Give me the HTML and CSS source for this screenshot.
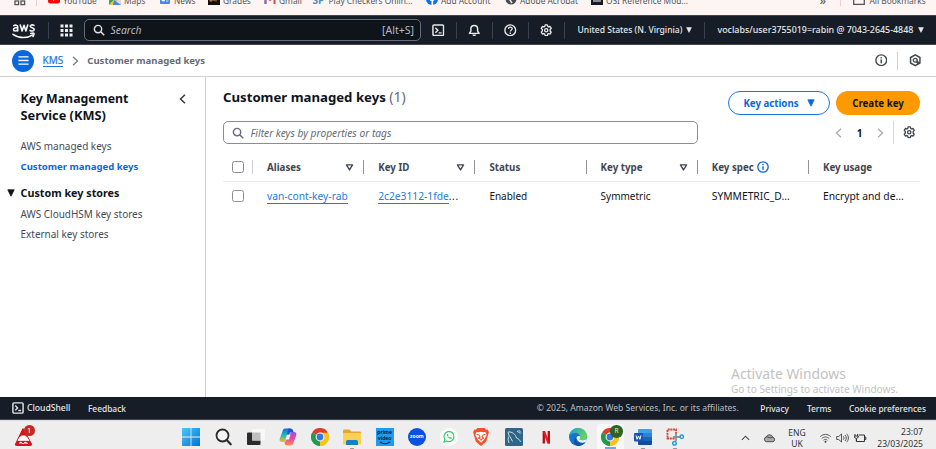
FILE: index.html
```html
<!DOCTYPE html>
<html lang="en">
<head>
<meta charset="utf-8">
<title>Customer managed keys</title>
<link rel="stylesheet" href="styles.css">
</head>
<body>
<svg class="defs" width="0" height="0" aria-hidden="true">
  <defs>
    <symbol id="gear" viewBox="0 0 16 16"><path d="M6.600 1.200h2.800l.5 1.900 1.200.7 1.900-.6 1.400 2.400L13 7v2l1.400 1.400-1.400 2.400-1.900-.6-1.200.7-.5 1.900H6.600l-.5-1.900-1.200-.7-1.900.6-1.400-2.400L3 9V7L1.600 5.600 3 3.200l1.900.6 1.200-.7z" fill="none" stroke="currentColor" stroke-width="1.700" stroke-linejoin="round"/><circle cx="8" cy="8" r="2.100" fill="none" stroke="currentColor" stroke-width="1.700"/></symbol>
    <symbol id="search" viewBox="0 0 16 16"><circle cx="6.700" cy="6.700" r="4.900" fill="none" stroke="currentColor" stroke-width="1.900"/><path d="M10.300 10.300 15 15" stroke="currentColor" stroke-width="2"/></symbol>
    <symbol id="shell" viewBox="0 0 16 16"><rect x="1.200" y="1.200" width="13.600" height="13.600" rx="1.500" fill="none" stroke="currentColor" stroke-width="1.900"/><path d="m4.300 4.700 3.200 3.200-3.200 3.200M8.500 11.300h3.700" fill="none" stroke="currentColor" stroke-width="1.800"/></symbol>
    <symbol id="info" viewBox="0 0 16 16"><circle cx="8" cy="8" r="6.900" fill="none" stroke="currentColor" stroke-width="1.800"/><path d="M8 7v4.800M8 4v1.800" stroke="currentColor" stroke-width="1.900"/></symbol>
    <symbol id="chrome" viewBox="0 0 20 20"><path d="M10 10 1.300 5A10 10 0 0 1 18.700 5z" fill="#e23b2e"/><path d="M10 10 18.700 5A10 10 0 0 1 10 20z" fill="#fcc21b"/><path d="M10 10v10A10 10 0 0 1 1.300 5z" fill="#229a4b"/><path d="M10 5.200h8.800A10 10 0 0 1 10 20l4.200-7.500z" fill="#fcc21b"/><circle cx="10" cy="10" r="4.900" fill="#fff"/><circle cx="10" cy="10" r="3.800" fill="#3478e8"/></symbol>
    <symbol id="sort" viewBox="0 0 10 10"><path d="M1.600 2h6.800L5 7.700z" fill="none" stroke="currentColor" stroke-width="1.500" stroke-linejoin="round"/></symbol>
    <symbol id="caret" viewBox="0 0 10 10"><path d="M1 1h8L5 9z" fill="currentColor" stroke="currentColor" stroke-linejoin="round"/></symbol>
    <linearGradient id="win" x2="1" y2="1"><stop stop-color="#4cc8f5"/><stop offset="1" stop-color="#0870cf"/></linearGradient>
    <linearGradient id="copA" x2="0" y2="1"><stop stop-color="#1769df"/><stop offset=".5" stop-color="#22b7b9"/><stop offset="1" stop-color="#f2bf22"/></linearGradient>
    <linearGradient id="copB" x2="0" y2="1"><stop stop-color="#9553e8"/><stop offset=".5" stop-color="#e74a9c"/><stop offset="1" stop-color="#fb8a50"/></linearGradient>
    <linearGradient id="edgeA" x2="1" y2=".4"><stop stop-color="#1ba0de"/><stop offset="1" stop-color="#63d45c"/></linearGradient>
  </defs>
</svg>

<div class="screen">
  <div class="bookmarks">
    <span class="bm"><svg class="bm-apps" viewBox="0 0 12 12"><g fill="none" stroke="#555" stroke-width="1.300"><rect x="1" y="1" width="3.600" height="3.600"/><rect x="7" y="1" width="3.600" height="3.600"/><rect x="1" y="7" width="3.600" height="3.600"/><rect x="7" y="7" width="3.600" height="3.600"/></g></svg></span>
    <span class="bm"><i class="bm-line"></i></span>
    <span class="bm"><svg viewBox="0 0 12 12"><rect y="1.500" width="12" height="9" rx="2.500" fill="#f00"/><path d="m5 4 3.200 2L5 8z" fill="#fff"/></svg>YouTube</span>
    <span class="bm"><svg viewBox="0 0 12 12"><rect width="12" height="12" rx="1" fill="#34a853"/><path d="M0 12 12 0v12z" fill="#d8dde2"/><path d="M0 12 10 2l2 2-8 8z" fill="#fbc02d"/><path d="m5 7 7 5H4z" fill="#4285f4"/></svg>Maps</span>
    <span class="bm"><svg viewBox="0 0 12 12"><rect x="1" y="2" width="10" height="9" rx="1" fill="#4285f4"/><path d="M3 5h2.500v3H3zM7 5.500h2.500M7 8h2.500" fill="#fff" stroke="#fff" stroke-width=".8"/></svg>News</span>
    <span class="bm"><svg viewBox="0 0 12 12"><rect width="12" height="12" fill="#111"/><path d="M2 5v3h2V5zM6 5v3M8 8.500V5h2" fill="none" stroke="#e58a3c"/></svg>Grades</span>
    <span class="bm"><svg viewBox="0 0 12 12"><path d="M1.500 11V3L6 7l4.500-4v8" fill="none" stroke="#e24a3d" stroke-width="2"/><path d="M1.500 4v7" stroke="#4b83e8" stroke-width="2"/></svg>Gmail</span>
    <span class="bm"><b class="bm-sp">SP</b>Play Checkers Onlin...</span>
    <span class="bm"><svg viewBox="0 0 12 12"><circle cx="6" cy="6" r="6" fill="#0a72ef"/><path d="M6.300 12V5.500c0-1.500.6-2 2-2M4 7h4.200" fill="none" stroke="#fff" stroke-width="1.700"/></svg>Add Account</span>
    <span class="bm"><svg viewBox="0 0 12 12"><circle cx="6" cy="6" r="5.500" fill="#484a4e"/><path d="M2 4c3-1 4 1 3 3l2 3M7 2l3 3" fill="none" stroke="#eee" stroke-width="1.500"/></svg>Adobe Acrobat</span>
    <span class="bm"><svg viewBox="0 0 12 12"><rect width="12" height="12" fill="#171923"/><path d="M2 8h8M3 5l1.500 2M6 4v3M9 5 7.500 7" stroke="#fff"/></svg>OSI Reference Mod...</span>
    <span class="bm bm-more">»</span>
    <span class="bm"><i class="bm-line"></i></span>
    <span class="bm"><svg class="bm-folder" viewBox="0 0 12 12"><path d="M.7 10.300V1.500H5l1.200 1.500h5.100v7.300z" fill="none" stroke="#555" stroke-width="1.300"/></svg>All Bookmarks</span>
  </div>

  <header class="nav">
    <svg class="aws" viewBox="0 0 24 18"><g fill="none" stroke="#f4f5f6" stroke-width="1.600" stroke-linecap="round" stroke-linejoin="round"><path d="M1.800 3.700C3 2.900 5.700 2.700 5.700 5v4M5.700 6C3.400 5.400 1.500 6 1.500 7.500c0 1.900 3 2 4.200.1M8.300 3l1.800 6L12 3.300 13.900 9l1.800-6M22 3.400c-1.500-.9-3.800-.6-3.800.9 0 1.900 4 1 4 3.100 0 1.800-2.600 2-4.200 1.100"/><path d="M1 12.300c6.500 4.500 14.500 4 19.700.5"/><path d="M18.700 11.500c1.500-.4 3-.5 3.300 0s-.2 1.800-1 3"/></g></svg>
    <i class="nav-line"></i>
    <svg class="grid-icon" viewBox="0 0 13 13"><path d="M.5.500h3v3h-3zM5 .5h3v3H5zM9.500.500h3v3h-3zM.5 5h3v3h-3zM5 5h3v3H5zM9.500 5h3v3h-3zM.5 9.500h3v3h-3zM5 9.500h3v3H5zM9.500 9.500h3v3h-3z" fill="#eceef0"/></svg>
    <div class="nav-search"><svg class="i12"><use href="#search"/></svg><em>Search</em><span>[Alt+S]</span></div>
    <div class="nav-icons">
      <span><svg class="i13"><use href="#shell"/></svg></span>
      <span><svg class="i13" viewBox="0 0 16 16"><path d="M1.800 12h12.400L12.300 9V6.200a4.300 4.300 0 0 0-8.600 0V9z" fill="none" stroke="currentColor" stroke-width="1.900" stroke-linejoin="round"/><path d="M5.500 13.300h5c-.3 3-4.700 3-5 0z" fill="currentColor"/></svg></span>
      <span><svg class="i13" viewBox="0 0 16 16"><circle cx="8" cy="8" r="6.900" fill="none" stroke="currentColor" stroke-width="1.800"/><path d="M5.700 6.300c0-3 4.700-2.900 4.700-.2C10.400 8 8 7.800 8 9.700M8 10.900v1.800" fill="none" stroke="currentColor" stroke-width="1.700"/></svg></span>
      <span><svg class="i13"><use href="#gear"/></svg></span>
    </div>
    <div class="region">United States (N. Virginia)<svg class="i6"><use href="#caret"/></svg></div>
    <div class="account"><span>voclabs/user3755019=rabin @ 7043-2645-4848</span><svg class="i6"><use href="#caret"/></svg></div>
  </header>

  <div class="crumbs">
    <span class="menu"><svg viewBox="0 0 12 12"><path d="M.5 2h11M.5 6h11M.5 10h11" stroke="#fff" stroke-width="1.400"/></svg></span>
    <a class="crumb-link">KMS</a>
    <svg class="crumb-sep" viewBox="0 0 7 10"><path d="m1 .8 4.500 4.200L1 9.200" fill="none" stroke="#7b828c" stroke-width="1.400"/></svg>
    <b>Customer managed keys</b>
    <div class="crumb-tools">
      <svg class="i13"><use href="#info"/></svg>
      <i></i>
      <svg class="i13" viewBox="0 0 16 16"><path d="M8 1.100 14 4.500v7L8 14.900l-6-3.400v-7z" fill="none" stroke="currentColor" stroke-width="1.900" stroke-linejoin="round"/><circle cx="8" cy="8" r="2.500" fill="none" stroke="currentColor" stroke-width="1.700"/><path d="m8.500 8 5 2.300-2.800 3z" fill="currentColor"/></svg>
    </div>
  </div>

  <div class="body">
    <aside class="side">
      <div class="side-head"><h2>Key Management<br><span>Service (KMS)</span></h2><svg viewBox="0 0 7 10"><path d="M6 .8 1.500 5 6 9.200" fill="none" stroke="#343b46" stroke-width="1.500"/></svg></div>
      <a>AWS managed keys</a>
      <a class="active">Customer managed keys</a>
      <div class="group"><svg class="i8"><use href="#caret"/></svg>Custom key stores</div>
      <a>AWS CloudHSM key stores</a>
      <a>External key stores</a>
    </aside>

    <main class="main">
      <div class="title-row">
        <h1>Customer managed keys <span>(1)</span></h1>
        <button class="btn-outline">Key actions<svg class="i8"><use href="#caret"/></svg></button>
        <button class="btn-primary">Create key</button>
      </div>
      <div class="filter-row">
        <div class="filter"><svg class="i12"><use href="#search"/></svg><em>Filter keys by properties or tags</em></div>
        <div class="pager">
          <svg viewBox="0 0 7 10"><path d="M6 .8 1.500 5 6 9.200" fill="none" stroke="#a5abb3" stroke-width="1.300"/></svg>
          <b>1</b>
          <svg viewBox="0 0 7 10"><path d="m1 .8 4.500 4.200L1 9.200" fill="none" stroke="#a5abb3" stroke-width="1.300"/></svg>
        </div>
        <div class="prefs"><svg class="i13"><use href="#gear"/></svg></div>
      </div>
      <div class="row head">
        <div><i class="check"></i></div>
        <div>Aliases<svg class="sort"><use href="#sort"/></svg></div>
        <div>Key ID<svg class="sort"><use href="#sort"/></svg></div>
        <div>Status</div>
        <div>Key type<svg class="sort"><use href="#sort"/></svg></div>
        <div>Key spec<svg class="spec-info"><use href="#info"/></svg></div>
        <div>Key usage</div>
      </div>
      <div class="row data">
        <div><i class="check"></i></div>
        <div><a>van-cont-key-rab</a></div>
        <div><a>2c2e3112-1fde</a><span class="dots">...</span></div>
        <div>Enabled</div>
        <div>Symmetric</div>
        <div>SYMMETRIC_D...</div>
        <div>Encrypt and de...</div>
      </div>
      <div class="watermark"><p>Activate Windows</p><small>Go to Settings to activate Windows.</small></div>
    </main>
  </div>

  <footer class="foot">
    <svg class="i12"><use href="#shell"/></svg><span class="cs">CloudShell</span><span>Feedback</span>
    <span class="copy">© 2025, Amazon Web Services, Inc. or its affiliates.</span>
    <span class="f-priv">Privacy</span><span class="f-terms">Terms</span><span>Cookie preferences</span>
  </footer>

  <div class="taskbar">
    <div class="widget"><svg viewBox="0 0 20 22"><path d="M9 4.500 17.500 20q.5 1.500-1 1.500h-14q-1.500 0-1-1.500z" fill="#d8121b" stroke="#d8121b" stroke-linejoin="round"/><path d="M5 14.500c1-3 6-4 8-1l2 3H4zM5 19.300l2-1.300 2 2 2-2 3 1.500" fill="#fff" stroke="#fff" stroke-width=".7"/></svg><span class="count">1</span></div>
    <div class="apps">
      <span><svg viewBox="0 0 18 18"><path d="M0 0h8.600v8.600H0zM9.400 0H18v8.600H9.400zM0 9.400h8.600V18H0zM9.400 9.400H18V18H9.400z" fill="url(#win)"/></svg></span>
      <span><svg viewBox="0 0 18 18"><circle cx="8.500" cy="7.500" r="6" fill="#f5f5f5" stroke="#2c2c2c" stroke-width="1.800"/><path d="m12.700 12 4 4.300" stroke="#2c2c2c" stroke-width="2.200" stroke-linecap="round"/></svg></span>
      <span><svg viewBox="0 0 18 18"><rect x="0" y="4.500" width="13.500" height="12.500" rx="1" fill="#2b2b2b"/><rect x="5" y="1" width="13" height="11.500" rx="1" fill="#f8f8f8"/><rect x="5" y="4.500" width="8.500" height="8" fill="#bfbfbf"/></svg></span>
      <span><svg viewBox="0 0 18 18"><path d="M12.500 3C12 1 11.300.6 9.500.6H6.300C4.500.6 4 1.500 3.300 4L1 10c-1 3 0 4 2.500 4h2.300z" fill="url(#copA)"/><path d="M5.500 15c.5 2 1.200 2.400 3 2.400h3.200c1.800 0 2.300-.9 3-3.400L17 8c1-3 0-4-2.500-4h-2.300z" fill="url(#copB)"/><path d="M8 6.500h3.500L10 11.500H6.500z" fill="#f4eef5"/><path d="M9.500.6h2c1.700 0 2.400 1 3 3.400h-2.300c-1.400 0-2 .7-2.400 2.500H8z" fill="#1b56cf"/></svg></span>
      <span><svg><use href="#chrome"/></svg></span>
      <span class="open"><svg viewBox="0 0 18 18"><path d="M0 2.500Q0 1.500 1 1.500h5.500l2 2H17q1 0 1 1V16H0z" fill="#e6a72a"/><path d="M0 5h18v11.500H0z" fill="#fcd053"/><path d="M3 17v-3.500q0-1.500 1.500-1.500h9q1.500 0 1.500 1.500V17z" fill="#1680cc"/></svg></span>
      <span><b class="prime"><i>prime</i><i>video</i><svg viewBox="0 0 14 4"><path d="M1 1c4 3 8 3 12 0" fill="none" stroke="#071c2c" stroke-width="1.200"/></svg></b></span>
      <span><b class="zoom">zoom</b></span>
      <span><svg viewBox="0 0 18 18"><circle cx="9" cy="9" r="9" fill="#fff"/><path d="m4 14 .8-2.700A5 5 0 1 1 6.700 13z" fill="none" stroke="#35c969" stroke-width="1.200"/><path d="M7.100 6.200c-.9 1.500 1.900 5 4.200 4.700l.5-1.200-1.500-.8-.7.700c-.7-.3-1.300-.9-1.600-1.600l.5-.6-.6-1.400z" fill="#35c969"/></svg></span>
      <span><svg viewBox="0 0 18 18"><path d="M5.500 0h7L14.200 1.800l1.500-.2 1.200 2.600-.6 2-2.100 7.300L9 18l-5.200-4.500L1.700 6.200l-.6-2 1.200-2.600 1.500.2z" fill="#f4512b"/><path d="M4.500 4 7 4.300l2-.6 2 .6 2.500-.3L14.700 7l-2.500 4.500L9 14.800l-3.200-3.300L3.300 7z" fill="#fff"/><path d="m4.600 6.300 3 .9M13.400 6.300l-3 .9M7.500 7.500 8 9l-1.600 1.200L9 11.500l2.600-1.300L10 9l.5-1.500M9 11.500v1.200" fill="none" stroke="#f4512b" stroke-width="1.100"/></svg></span>
      <span><svg viewBox="0 0 18 18"><rect width="18" height="18" rx="1.500" fill="#2f6687"/><path d="M4 15c-1.300-3-1-5 .2-7L3 4c4-.5 7.500 2 8.500 6 2 .5 3 1.500 4 4M5 8.500l2.500 5M12 3l3.500 2.500M13.500 2 16 4.500" fill="none" stroke="#c7dce7" stroke-width="1"/></svg></span>
      <span><svg viewBox="0 0 18 18"><path d="M6.800 3v12.500M11.800 3v12.500" stroke="#b10c16" stroke-width="2.300"/><path d="M5.600 3h2.500l4.800 12.500h-2.500z" fill="#e81723"/></svg></span>
      <span><svg viewBox="0 0 18 18"><circle cx="9" cy="9" r="9" fill="#1676ca"/><path d="M.1 8C.8 3 4.600 0 9.200 0 14 0 18 3.600 18 8c0 3.200-2.500 4.300-5 4.300-1.600 0-2.700-.6-2.500-1.200.5-.5.8-1.100.8-1.900C11.300 6.400 8.700 4.900 6 5 3.200 5 .9 6.500.1 8z" fill="url(#edgeA)"/><path d="M7.600 8.800c-1.500 3 .8 6.600 4.300 6.600 1.900 0 3.300-.6 4.700-1.500C15 16.400 12.200 18 9 18c-3.800-1-6-5.200-1.400-9.200z" fill="#15529f"/><path d="M7.600 9.300c1-1.800 3.700-1.400 3.700-.1 0 .8-.3 1.400-.8 1.900-.2.600.9 1.200 2.500 1.200 2 0 3.900-.6 4.700-2-.2 1.200-.5 2.400-1.100 3.400-4 2.500-9.300-.4-9-4.400z" fill="#edf4f7"/></svg></span>
      <span class="current"><svg><use href="#chrome"/></svg><b class="avatar">R</b></span>
      <span class="open"><svg viewBox="0 0 18 18"><path d="M5 1h12q1 0 1 1v3H4V2q0-1 1-1z" fill="#3aa2e8"/><path d="M4 5h14v4H4z" fill="#2b83da"/><path d="M4 9h14v4H4z" fill="#1d62bc"/><path d="M4 13h14v3q0 1-1 1H5q-1 0-1-1z" fill="#164a9b"/><rect y="5" width="9" height="8.500" rx="1" fill="#1755ae"/><path d="m2 7.300 1.100 4L4.500 8l1.400 3.300L7 7.300" fill="none" stroke="#fff" stroke-width="1"/></svg></span>
      <span class="open"><svg viewBox="0 0 18 18"><path d="M8.500 10.500H1.500V1.500h8.500V7" fill="none" stroke="#d8432c" stroke-width="1.800" stroke-dasharray="2 .7"/><path d="M10 5v8M7 9h7.500" stroke="#89939c" stroke-width="1.800"/><circle cx="8.500" cy="15.300" r="1.800" fill="none" stroke="#2aa0dc" stroke-width="1.500"/><circle cx="15.800" cy="8.700" r="1.700" fill="none" stroke="#2aa0dc" stroke-width="1.500"/></svg></span>
    </div>
    <div class="tray">
      <svg class="up" viewBox="0 0 10 6"><path d="m1 5 4-4 4 4" fill="none" stroke="#444" stroke-width="1.200"/></svg>
      <svg class="cloud" viewBox="0 0 14 10"><path d="M3.500 9a2.700 2.700 0 0 1 0-5.200 3.800 3.800 0 0 1 7.100.4A2.500 2.500 0 0 1 10.800 9z" fill="#aaa" stroke="#444"/><path d="M3.500 4c2-.5 3.500 1.500 7 .5" fill="none" stroke="#444"/></svg>
      <div class="lang">ENG<br>UK</div>
      <svg class="wifi" viewBox="0 0 12 10"><g fill="none" stroke="#555"><path d="M.7 3.700c3-3 7.600-3 10.600 0M2.300 5.500c2.200-2 5.200-2 7.400 0M4 7.200c1.300-1.100 2.700-1.100 4 0"/></g><circle cx="6" cy="8.700" r="1" fill="#444"/></svg>
      <svg class="vol" viewBox="0 0 13 10"><path d="M.7 3.500h2L5.500 1v8L2.700 6.500h-2zM7.300 3.300c1 1 1 2.400 0 3.400M9 2c1.700 1.700 1.700 4.300 0 6M10.600.8c2.400 2.400 2.400 6 0 8.400" fill="none" stroke="#444" stroke-width=".9"/></svg>
      <svg class="bat" viewBox="0 0 13 10"><path d="M5 2h5.500v6.500h-8V6M10.500 4h1.300v2.500h-1.300M1 1v2M3.700 1v2M.3 3h4v1.300q-2 2.400-4 0zM2.300 5.500v3" fill="none" stroke="#333" stroke-width="1"/></svg>
      <div class="clock">23:07<br>23/03/2025</div>
    </div>
  </div>
</div>
</body>
</html>
```
FILE: styles.css
```css
* { box-sizing: border-box; }
body { margin: 0; background: #fff; font-family: "Noto Sans", "Open Sans", sans-serif; font-size: 10px; color: #0f141a; }
.defs { display: block; position: absolute; }
svg { display: block; flex: none; }
.screen { width: 936px; height: 449px; display: grid; grid-template-rows: 15px 30px 32px 320px 23px 29px; overflow: hidden; }
.i6 { width: 6px; height: 6px; }
.i8 { width: 8px; height: 8px; }
.i12 { width: 12px; height: 12px; }
.i13 { width: 12.5px; height: 12.5px; }

.bookmarks { display: grid; grid-template-columns: 22px 12px 61px 50px 49px 56px 49px 113px 79px 86px 229px 20.500px 12.500px 1fr; padding-left: 13.500px; background: #fdf5f4; height: 15px; overflow: hidden; }
.bm { display: flex; align-items: center; height: 12px; margin-top: -6px; font-size: 8.350px; color: #55555a; white-space: nowrap; }
.bm svg { width: 12px; height: 12px; margin-right: 3.500px; margin-top: -2px; }
.bm .bm-apps { margin-top: 0; }
.bm .bm-folder { margin-right: 5px; margin-top: 0; }
.bm-line { width: 1px; height: 12px; background: #f3ccd3; }
.bm-sp { width: 16px; color: #4a8fc4; font-size: 10px; }
.bm-more { font-size: 13px; }

.nav { display: flex; align-items: center; background: #161d26; color: #e6e9ec; padding-left: 12px; border-top: 1px solid #40464e; border-bottom: 1px solid #40464e; font-weight: 500; font-size: 8.560px; white-space: nowrap; }
.aws { width: 24px; height: 18px; margin-top: 1px; }
.nav-line { width: 1px; height: 17px; background: #38414d; margin: 0 11px 0 12px; }
.grid-icon { width: 13px; height: 13px; }
.nav-search { width: 337px; height: 22px; margin-left: 11px; border: 1.500px solid #656c77; border-radius: 5px; background: #0f141a; display: flex; align-items: center; padding: 0 6px 0 8px; color: #b4bac2; font-weight: 400; }
.nav-search .i12 { color: #e0e3e7; }
.nav-search em { margin-left: 5.500px; font-size: 10.400px; flex: 1; }
.nav-search span { font-size: 10.500px; }
.nav-icons { display: flex; }
.nav-icons span { width: 36px; height: 17px; display: grid; place-items: center; border-right: 1px solid #38414d; }
.region { display: flex; align-items: center; height: 17px; padding-left: 12.500px; width: 140px; border-right: 1px solid #38414d; gap: 4px; margin-right: 12.500px; }
.account { display: flex; align-items: center; gap: 4.500px; font-size: 8.880px; }

.crumbs { display: flex; align-items: center; border-bottom: 1px solid #cfd3d8; padding: 0 15px 0 12px; }
.menu { width: 22px; height: 22px; border-radius: 50%; background: #0969dc; display: grid; place-items: center; }
.menu svg { width: 11px; height: 11px; }
.crumb-link { color: #2278dd; font-weight: 400; border-bottom: 1px solid #2278dd; line-height: 12px; margin-left: 8.500px; -webkit-text-stroke: .2px #2278dd; }
.crumb-sep { width: 7px; height: 10px; margin: 0 8px 0 9px; }
.crumbs b { font-size: 9.560px; color: #656b76; }
.crumb-tools { margin-left: auto; display: flex; align-items: center; color: #424650; }
.crumb-tools i { width: 1px; height: 18px; background: #cfd3d8; margin: 0 10.500px 0 10px; }

.body { display: grid; grid-template-columns: 206px 1fr; }
.side { border-right: 1px solid #c9cdd3; padding: 14px 0 0 20.500px; display: flex; flex-direction: column; }
.side-head { display: flex; justify-content: space-between; padding-right: 19px; margin-bottom: 12px; }
.side-head svg { width: 7px; height: 10px; margin-top: 3px; }
h2 { margin: 0; font-size: 12.350px; line-height: 16px; }
h2 span { font-size: 12.800px; }
.side a { font-size: 9.960px; line-height: 20.600px; color: #454b56; }
.side a.active { font-weight: 700; font-size: 9.560px; color: #0969dc; }
.group { display: flex; align-items: center; gap: 6px; margin: 5.500px 0 .5px -14px; font-weight: 700; font-size: 10.760px; line-height: 20.600px; }

.main { padding: 14px 16px 0 17px; display: flex; flex-direction: column; }
.title-row { display: flex; height: 24px; }
h1 { margin: -3px auto 0 0; font-size: 13.200px; line-height: 18px; }
h1 span { font-weight: 400; font-size: 14px; color: #656b76; }
button { height: 24px; border-radius: 12px; border: 0; font: 700 9.700px "Noto Sans", sans-serif; padding: 0; display: flex; align-items: center; justify-content: center; }
.btn-outline { width: 102px; border: 1.500px solid #1a74e0; background: #fff; color: #0969dc; gap: 8px; margin-right: 6px; }
.btn-primary { width: 84px; background: #f90; color: #0f141a; }
.filter-row { display: flex; margin-top: 6px; height: 23px; }
.filter { width: 474.500px; border: 1.500px solid #8c8c94; border-radius: 5px; display: flex; align-items: center; padding-left: 8px; gap: 6.500px; color: #656b76; }
.filter em { font-size: 10.220px; }
.pager { display: flex; align-items: center; margin-left: auto; gap: 14.500px; }
.pager svg { width: 7px; height: 10px; }
.prefs { width: 27px; margin-left: 9px; border-left: 1px solid #d4d7dc; display: flex; align-items: center; justify-content: flex-end; padding-right: 4.500px; color: #424650; }

.row { display: grid; grid-template-columns: 30px repeat(5, 111.200px) 1fr; }
.row > div { display: flex; align-items: center; padding-left: 14px; white-space: nowrap; }
.row > div:first-child { padding-left: 9px; }
.check { width: 12px; height: 12px; border: 1.500px solid #8c8c94; border-radius: 2.500px; }
.head { height: 38px; padding: 9px 0 0; border-bottom: 1px solid #ebebf0; font-weight: 700; font-size: 9.750px; color: #424650; }
.head > div:not(:last-child) { border-right: 1.500px solid #90939b; height: 14px; align-self: center; }
.head > div:first-child { border-color: #cbcdd2; }
.sort { width: 9px; height: 9px; margin: 1px 9px 0 auto; }
.spec-info { width: 12px; height: 12px; margin-left: 3px; color: #0969dc; }
.data { height: 29px; font-size: 10px; padding-bottom: 1px; }
.data a { color: #1f79e0; border-bottom: 1px solid #1f79e0; font-size: 10.250px; line-height: 13px; padding-top: 1px; }
.data .dots { letter-spacing: .6px; }
.data > div:nth-child(n+6) { font-size: 10.300px; }
.watermark { margin: auto 0 0 508px; color: #c2c2c2; white-space: nowrap; }
.watermark p { margin: 0; font-size: 13.900px; line-height: 17px; }
.watermark small { display: block; font-size: 10.080px; line-height: 15.500px; }

.foot { display: flex; align-items: center; background: #161d26; border-bottom: 1px solid #40464e; color: #e4e7ea; font-size: 8.400px; font-weight: 500; padding: 0 10px 0 11.500px; white-space: nowrap; }
.cs { margin: 0 17.500px 0 3.500px; font-size: 8.600px; }
.copy { margin: 0 21.500px 0 auto; font-weight: 400; font-size: 8.580px; color: #b9bfc7; }
.f-priv { margin-right: 18px; }
.f-terms { margin-right: 17.500px; }

.taskbar { background: #eeeeee; display: flex; border-top: 1px solid #dcdcdc; }
.widget { width: 175px; padding: 2.500px 0 0 14px; position: relative; }
.widget svg { width: 20px; height: 22px; }
.count { position: absolute; left: 24px; top: 4px; width: 10.500px; height: 11px; border-radius: 50%; background: #c52a1f; color: #fff; font-size: 7.500px; line-height: 11px; text-align: center; }
.apps { display: grid; grid-template-columns: repeat(16, 32.250px); }
.apps > span { display: grid; place-items: center; position: relative; padding-top: 4px; }
.apps svg { width: 18px; height: 18px; }
.open::after, .current::after { content: ""; position: absolute; bottom: 0; width: 4px; height: 1px; background: #999; }
.current::before { content: ""; position: absolute; inset: 3px 2.500px 0 3px; background: #f9f9f9; border-radius: 3px 3px 0 0; }
.current svg { position: relative; }
.current::after { width: 11px; height: 2px; background: #67aee8; }
.avatar { position: absolute; left: 16px; top: 4px; width: 12.500px; height: 12.500px; border-radius: 50%; background: #2f6420; color: #e3ecdf; font-size: 6.500px; font-weight: 400; line-height: 12.500px; text-align: center; }
.prime { width: 18px; height: 18px; background: #1d9bf0; color: #071c2c; font-size: 5px; text-align: center; padding-top: 1px; }
.prime i { display: block; font-style: normal; line-height: 6px; }
.prime svg { width: 12px; height: 3.500px; margin: 0 auto; }
.zoom { width: 18px; height: 18px; border-radius: 50%; background: #0b50e0; color: #fff; font-size: 5px; line-height: 17px; text-align: center; }
.tray { display: flex; align-items: center; flex: 1; padding: 5px 13px 0 50px; color: #333; white-space: nowrap; }
.up { width: 9px; height: 6px; }
.cloud { width: 13px; height: 10px; margin-left: 13px; }
.lang { width: 28px; margin-left: 7px; text-align: center; font-size: 8.500px; line-height: 11px; }
.wifi { width: 13px; height: 10px; margin-left: 8px; }
.vol { width: 13px; height: 10px; margin-left: 4px; }
.bat { width: 13px; height: 10px; margin-left: 5px; }
.clock { margin-left: auto; text-align: right; font-size: 8.600px; line-height: 12px; }
```
